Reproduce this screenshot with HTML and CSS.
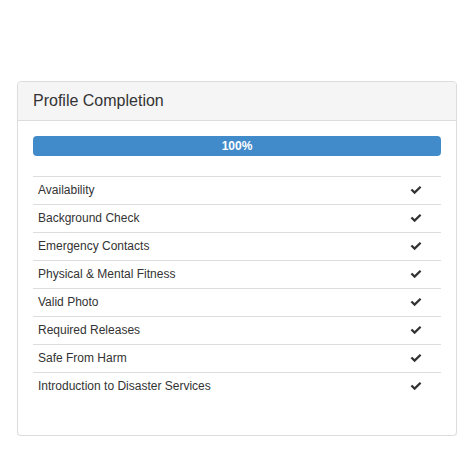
FILE: index.html
```html
<!DOCTYPE html>
<html>
<head>
<meta charset="utf-8">
<link rel="stylesheet" href="styles.css">
</head>
<body>
<div class="panel">
  <div class="panel-heading"><h3 class="panel-title">Profile Completion</h3></div>
  <div class="panel-body">
    <div class="progress"><div class="progress-bar" style="width:100%">100%</div></div>
    <table class="table">
      <tbody>
        <tr><td>Availability</td><td class="chk"><svg viewBox="0 0 12 10" width="12" height="10"><path d="M0.6 5.3 L2.2 3.7 L4.6 6.1 L9.8 0.9 L11.4 2.5 L4.6 9.3 Z" fill="#333"/></svg></td></tr>
        <tr><td>Background Check</td><td class="chk"><svg viewBox="0 0 12 10" width="12" height="10"><path d="M0.6 5.3 L2.2 3.7 L4.6 6.1 L9.8 0.9 L11.4 2.5 L4.6 9.3 Z" fill="#333"/></svg></td></tr>
        <tr><td>Emergency Contacts</td><td class="chk"><svg viewBox="0 0 12 10" width="12" height="10"><path d="M0.6 5.3 L2.2 3.7 L4.6 6.1 L9.8 0.9 L11.4 2.5 L4.6 9.3 Z" fill="#333"/></svg></td></tr>
        <tr><td>Physical &amp; Mental Fitness</td><td class="chk"><svg viewBox="0 0 12 10" width="12" height="10"><path d="M0.6 5.3 L2.2 3.7 L4.6 6.1 L9.8 0.9 L11.4 2.5 L4.6 9.3 Z" fill="#333"/></svg></td></tr>
        <tr><td>Valid Photo</td><td class="chk"><svg viewBox="0 0 12 10" width="12" height="10"><path d="M0.6 5.3 L2.2 3.7 L4.6 6.1 L9.8 0.9 L11.4 2.5 L4.6 9.3 Z" fill="#333"/></svg></td></tr>
        <tr><td>Required Releases</td><td class="chk"><svg viewBox="0 0 12 10" width="12" height="10"><path d="M0.6 5.3 L2.2 3.7 L4.6 6.1 L9.8 0.9 L11.4 2.5 L4.6 9.3 Z" fill="#333"/></svg></td></tr>
        <tr><td>Safe From Harm</td><td class="chk"><svg viewBox="0 0 12 10" width="12" height="10"><path d="M0.6 5.3 L2.2 3.7 L4.6 6.1 L9.8 0.9 L11.4 2.5 L4.6 9.3 Z" fill="#333"/></svg></td></tr>
        <tr><td>Introduction to Disaster Services</td><td class="chk"><svg viewBox="0 0 12 10" width="12" height="10"><path d="M0.6 5.3 L2.2 3.7 L4.6 6.1 L9.8 0.9 L11.4 2.5 L4.6 9.3 Z" fill="#333"/></svg></td></tr>
      </tbody>
    </table>
  </div>
</div>
</body>
</html>
```
FILE: styles.css
```css
* { box-sizing: border-box; }
html, body { margin: 0; padding: 0; background: #fff; }
body {
  font-family: "Liberation Sans", Arial, sans-serif;
  font-size: 12px;
  line-height: 1.428571;
  color: #333;
  padding: 81px 16px 0 17px;
}
.panel {
  width: 440px;
  border: 1px solid #ddd;
  border-radius: 4px;
  background: #fff;
  box-shadow: 0 1px 1px rgba(0,0,0,0.05);
}
.panel-heading {
  background: #f5f5f5;
  border-bottom: 1px solid #ddd;
  border-radius: 3px 3px 0 0;
  padding: 10px 15px;
  height: 39px;
}
.panel-title {
  margin: 0;
  font-size: 16px;
  font-weight: normal;
  line-height: 18px;
  color: #333;
}
.panel-body { padding: 15px; }
.progress {
  height: 20px;
  margin-bottom: 20px;
  background: #f5f5f5;
  border-radius: 4px;
  overflow: hidden;
}
.progress-bar {
  height: 20px;
  background: #428bca;
  color: #fff;
  font-weight: bold;
  text-align: center;
  line-height: 20px;
  font-size: 12px;
}
.table {
  width: 100%;
  border-collapse: collapse;
  border-spacing: 0;
  margin-bottom: 20px;
}
.table td {
  padding: 5px;
  border-top: 1px solid #ddd;
  line-height: 17px;
  vertical-align: top;
}
.table td.chk {
  width: 43px;
  padding-left: 12px;
}
.chk svg { display: block; margin-top: 3px; }
```
